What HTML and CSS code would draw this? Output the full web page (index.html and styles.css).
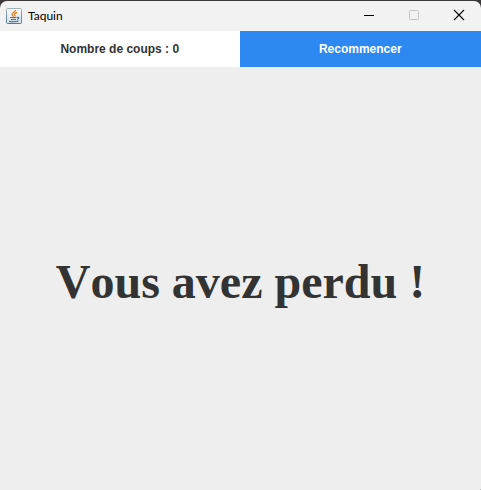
FILE: index.html
```html
<!DOCTYPE html>
<html lang="fr">
<head>
<meta charset="utf-8">
<meta name="viewport" content="width=device-width, initial-scale=1">
<title>Taquin</title>
<link rel="stylesheet" href="styles.css">
</head>
<body>
<div class="window">
  <header class="titlebar">
    <svg class="app-icon" viewBox="0 0 16 16" aria-hidden="true">
      <defs>
        <linearGradient id="tile" x1="0" y1="0" x2="0" y2="1">
          <stop offset="0" stop-color="#fdfdfd"/>
          <stop offset="1" stop-color="#d3e0ea"/>
        </linearGradient>
        <linearGradient id="edge" x1="0" y1="0" x2="0" y2="1">
          <stop offset="0" stop-color="#9db3c3"/>
          <stop offset="1" stop-color="#54788f"/>
        </linearGradient>
      </defs>
      <rect x="0.5" y="0.5" width="15" height="15" rx="1" fill="url(#tile)" stroke="url(#edge)"/>
      <path d="M9.5 2C9.500 4 5.800 4.600 6 6.400C6.200 7.500 7.200 7.700 7.400 8.600M11 4.400C9 5 8 5.700 8.300 6.600C8.600 7.300 9.500 7.500 8.700 8.600" fill="none" stroke="#ee7e1c" stroke-width="1.300"/>
      <path d="M4 9.500H10.500M5 11.500H10M11 9.500C13.600 8.600 13.300 11 11 11.500M3 13.300C5.500 14 10.500 14 12.500 13" fill="none" stroke="#3f6d93" stroke-width="1.100"/>
    </svg>
    <span class="title">Taquin</span>
    <div class="window-controls">
      <button class="control" type="button" aria-label="Réduire">
        <svg viewBox="0 0 12 12" aria-hidden="true"><path d="M1 6.500H11" stroke="#000"/></svg>
      </button>
      <button class="control" type="button" aria-label="Agrandir" disabled>
        <svg viewBox="0 0 12 12" aria-hidden="true"><rect x="1.500" y="1.500" width="9" height="9" rx="1" fill="none" stroke="#c3c3c3"/></svg>
      </button>
      <button class="control" type="button" aria-label="Fermer">
        <svg viewBox="0 0 12 12" aria-hidden="true"><path d="M1 1L11 11M11 1L1 11" stroke="#000" stroke-width="1.100"/></svg>
      </button>
    </div>
  </header>
  <div class="toolbar">
    <div class="moves">Nombre de coups : 0</div>
    <button class="restart" type="button">Recommencer</button>
  </div>
  <main class="board">
    <h1 class="result">Vous avez perdu !</h1>
  </main>
</div>
</body>
</html>
```
FILE: styles.css
```css
* {
  box-sizing: border-box;
}

body {
  margin: 0;
  background: #3b3839;
}

.window {
  display: flex;
  flex-direction: column;
  min-height: 100vh;
  padding-top: 1px;
}

.titlebar {
  display: flex;
  align-items: center;
  height: 30px;
  padding-left: 6px;
  background: #f2f2f2;
  border-radius: 7px 7px 0 0;
}

.app-icon {
  width: 16px;
  height: 16px;
}

.title {
  margin-left: 6px;
  color: #000;
  font: 12px/16px Lato, "Open Sans", sans-serif;
}

.window-controls {
  display: flex;
  align-self: flex-start;
  height: 28px;
  margin-left: auto;
}

.control {
  display: flex;
  align-items: center;
  justify-content: center;
  width: 45px;
  padding: 0;
  border: 0;
  background: transparent;
}

.control svg {
  width: 12px;
  height: 12px;
}

.toolbar {
  display: grid;
  grid-template-columns: calc(50% - 1px) 1fr;
  height: 36px;
  font: bold 12px/16px "Liberation Sans", Arial, sans-serif;
}

.moves {
  display: flex;
  align-items: center;
  justify-content: center;
  background: #fff;
  color: #333;
}

.restart {
  padding: 0;
  border: 0;
  background: #2d89f1;
  color: #fff;
  font: inherit;
}

.board {
  display: flex;
  flex: 1;
  align-items: center;
  justify-content: center;
  padding-top: 6px;
  background: #eee;
  border-radius: 0 0 1px 0;
}

.result {
  margin: 0;
  color: #333;
  font: bold 48px/56px "Liberation Serif", "Times New Roman", serif;
  font-kerning: none;
}
```
